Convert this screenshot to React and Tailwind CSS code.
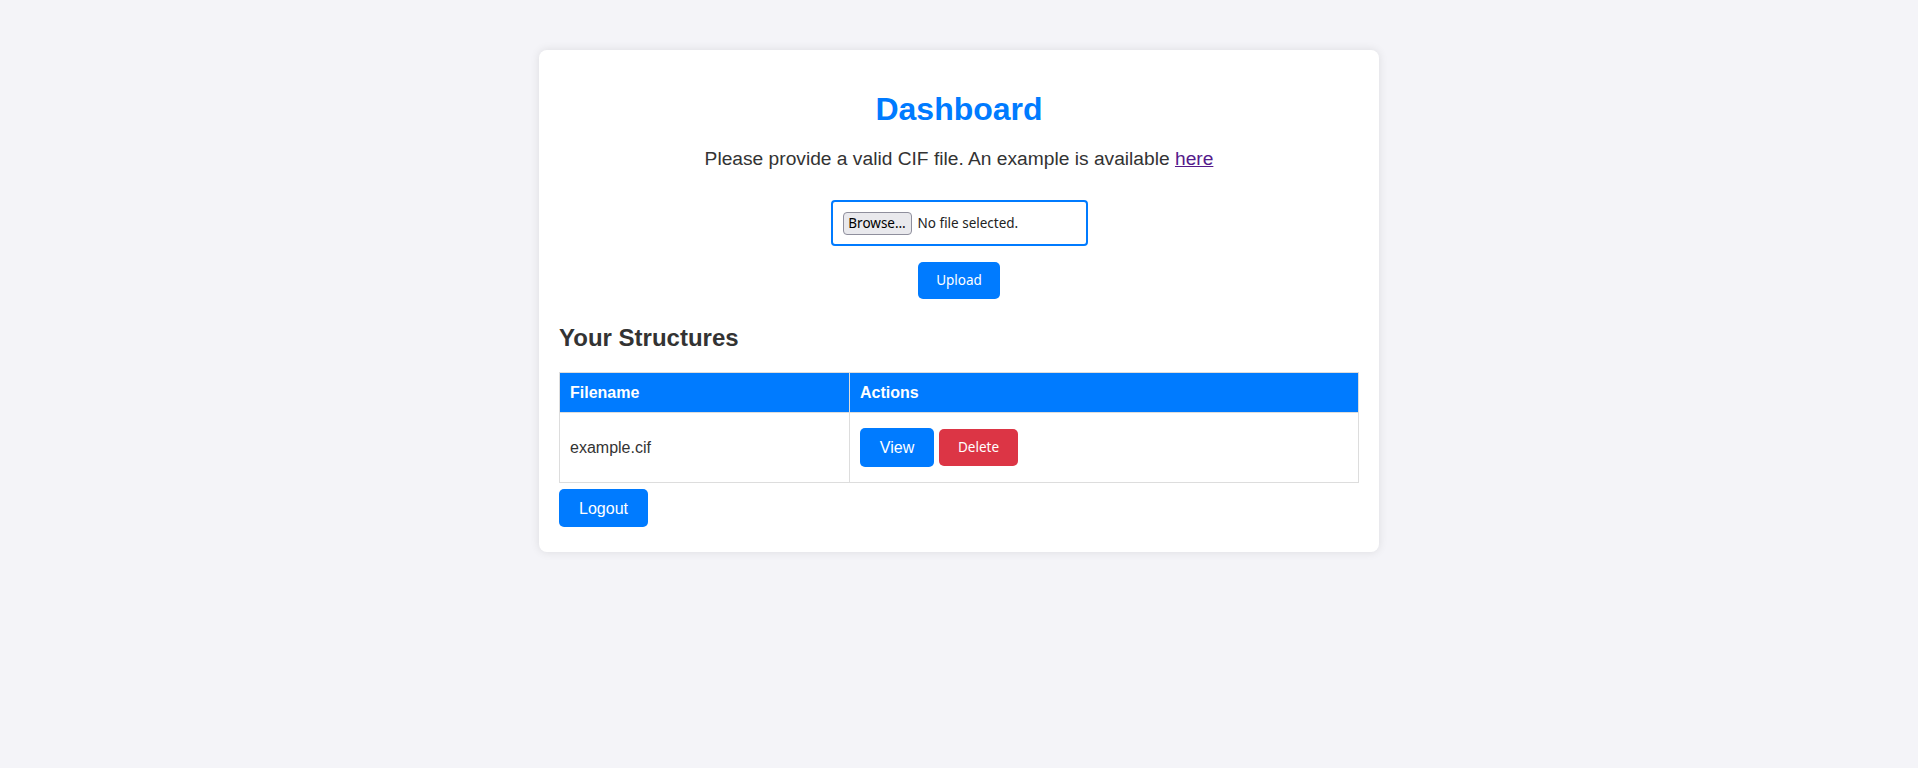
export default function App() {
  const arial = { fontFamily: '"Liberation Sans", Arial, sans-serif' };
  return (
    <div className="min-h-screen w-full bg-[#f4f4f8] pt-[50px] text-[#333]" style={arial}>
      <div className="mx-auto w-[840px] rounded-lg bg-white p-5 shadow-[0_0_10px_rgba(0,0,0,0.1)]">
        <h1 className="mt-[21px] mb-[20px] text-center text-[32px] font-bold leading-[37px] text-[#007bff]">
          Dashboard
        </h1>
        <p className="text-center text-[19.2px] leading-[22px] text-[#333]">
          Please provide a valid CIF file. An example is available{" "}
          <a href="#" className="text-[#551a8b] underline">here</a>
        </p>
        <div className="mt-[30px] flex flex-col items-center">
          <div className="flex h-[46px] w-[257px] items-center rounded-[4px] border-2 border-[#007bff] px-[10px] font-['Noto_Sans',sans-serif]">
            <span className="flex h-[23px] w-[69px] items-center justify-center rounded-[4px] border border-[#8f8f9d] bg-[#e9e9ed] text-[13.5px] text-black">
              Browse…
            </span>
            <span className="ml-[6px] text-[13.5px] text-[#222]">No file selected.</span>
          </div>
          <button className="mt-[16px] flex h-[37px] w-[82px] items-center justify-center rounded-[5px] bg-[#007bff] font-['Noto_Sans',sans-serif] text-[13.5px] text-white">
            Upload
          </button>
        </div>
        <h2 className="mt-[25px] text-[24px] font-bold leading-[28px] text-[#333]">Your Structures</h2>
        <table className="mt-[20px] w-full border-collapse text-[16px]">
          <thead>
            <tr className="bg-[#007bff] text-white">
              <th className="w-[290px] border border-[#ddd] px-[10px] py-[10px] text-left font-bold leading-[19px]">Filename</th>
              <th className="border border-[#ddd] px-[10px] py-[10px] text-left font-bold leading-[19px]">Actions</th>
            </tr>
          </thead>
          <tbody>
            <tr>
              <td className="border border-[#ddd] px-[10px] py-[10px] align-middle leading-[18px] text-[#333]">example.cif</td>
              <td className="border border-[#ddd] px-[10px] pt-[15px] pb-[15px] align-middle">
                <div className="flex items-center gap-[5px]">
                  <button className="h-[39px] w-[74px] rounded-[5px] bg-[#007bff] text-[16px] leading-[19px] text-white">View</button>
                  <button className="flex h-[37px] w-[79px] items-center justify-center rounded-[5px] bg-[#dc3545] font-['Noto_Sans',sans-serif] text-[13.5px] text-white">
                    Delete
                  </button>
                </div>
              </td>
            </tr>
          </tbody>
        </table>
        <button className="mt-[6px] mb-[5px] h-[38px] w-[89px] rounded-[5px] bg-[#007bff] text-[16px] leading-[19px] text-white">
          Logout
        </button>
      </div>
    </div>
  );
}
